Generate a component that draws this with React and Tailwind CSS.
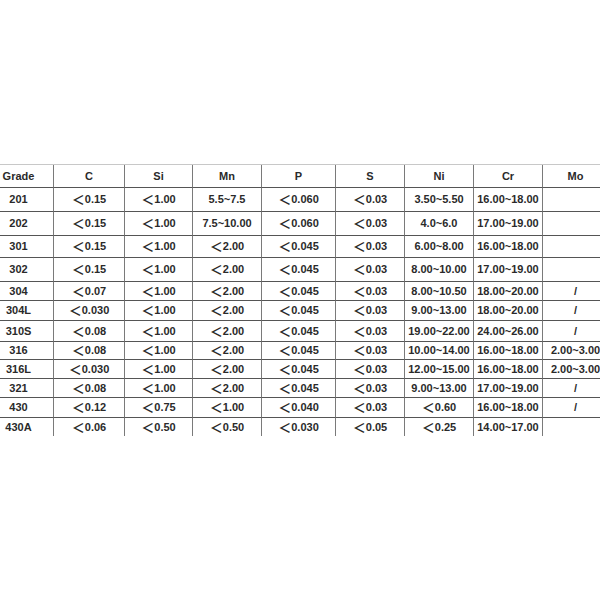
const cols = ["w-[70px]", "w-[71px]", "w-[68px]", "w-[69px]", "w-[74px]", "w-[69px]", "w-[69px]", "w-[69px]", "w-[66px]"];

const header = ["Grade", "C", "Si", "Mn", "P", "S", "Ni", "Cr", "Mo"];

const L = "＜";

const rows = [
  { h: "h-[24px]", c: ["201", L + "0.15", L + "1.00", "5.5~7.5", L + "0.060", L + "0.03", "3.50~5.50", "16.00~18.00", ""] },
  { h: "h-[24px]", c: ["202", L + "0.15", L + "1.00", "7.5~10.00", L + "0.060", L + "0.03", "4.0~6.0", "17.00~19.00", ""] },
  { h: "h-[22px]", c: ["301", L + "0.15", L + "1.00", L + "2.00", L + "0.045", L + "0.03", "6.00~8.00", "16.00~18.00", ""] },
  { h: "h-[24px]", c: ["302", L + "0.15", L + "1.00", L + "2.00", L + "0.045", L + "0.03", "8.00~10.00", "17.00~19.00", ""] },
  { h: "h-[19px]", c: ["304", L + "0.07", L + "1.00", L + "2.00", L + "0.045", L + "0.03", "8.00~10.50", "18.00~20.00", "/"] },
  { h: "h-[20px]", c: ["304L", L + "0.030", L + "1.00", L + "2.00", L + "0.045", L + "0.03", "9.00~13.00", "18.00~20.00", "/"] },
  { h: "h-[21px]", c: ["310S", L + "0.08", L + "1.00", L + "2.00", L + "0.045", L + "0.03", "19.00~22.00", "24.00~26.00", "/"] },
  { h: "h-[18px]", c: ["316", L + "0.08", L + "1.00", L + "2.00", L + "0.045", L + "0.03", "10.00~14.00", "16.00~18.00", "2.00~3.00"] },
  { h: "h-[19px]", c: ["316L", L + "0.030", L + "1.00", L + "2.00", L + "0.045", L + "0.03", "12.00~15.00", "16.00~18.00", "2.00~3.00"] },
  { h: "h-[19px]", c: ["321", L + "0.08", L + "1.00", L + "2.00", L + "0.045", L + "0.03", "9.00~13.00", "17.00~19.00", "/"] },
  { h: "h-[20px]", c: ["430", L + "0.12", L + "0.75", L + "1.00", L + "0.040", L + "0.03", L + "0.60", "16.00~18.00", "/"] },
  { h: "h-[18px]", c: ["430A", L + "0.06", L + "0.50", L + "0.50", L + "0.030", L + "0.05", L + "0.25", "14.00~17.00", ""] },
];

// "<" sign is drawn a bit larger than the digits
function Value({ text }) {
  if (text.startsWith(L)) {
    return (
      <>
        <span className="text-[13px] font-bold">{L}</span>
        {text.slice(1)}
      </>
    );
  }
  return text;
}

function Cell({ text, w, last }) {
  return (
    <div
      className={
        w +
        " flex items-center justify-center whitespace-nowrap border-l border-[#7a7a7a] " +
        (last ? "" : "border-b border-b-[#555555]")
      }
    >
      <Value text={text} />
    </div>
  );
}

export default function App() {
  return (
    <div className="w-[600px] h-[600px] overflow-hidden bg-white pt-[164px]">
      <div className="ml-[-17px] w-[625px] border-t border-[#c8c8c8] text-[11px] font-bold text-[#2a2a2a] leading-none font-['Liberation_Sans',Arial,'Noto_Sans_CJK_SC',sans-serif]">
        {/* HEADER */}
        <div className="flex h-[23px]">
          {header.map((t, i) => (
            <Cell key={i} text={t} w={cols[i]} />
          ))}
        </div>

        {/* ROWS */}
        {rows.map((r, ri) => (
          <div key={ri} className={"flex " + r.h}>
            {r.c.map((t, i) => (
              <Cell key={i} text={t} w={cols[i]} last={ri === rows.length - 1} />
            ))}
          </div>
        ))}
      </div>
    </div>
  );
}
